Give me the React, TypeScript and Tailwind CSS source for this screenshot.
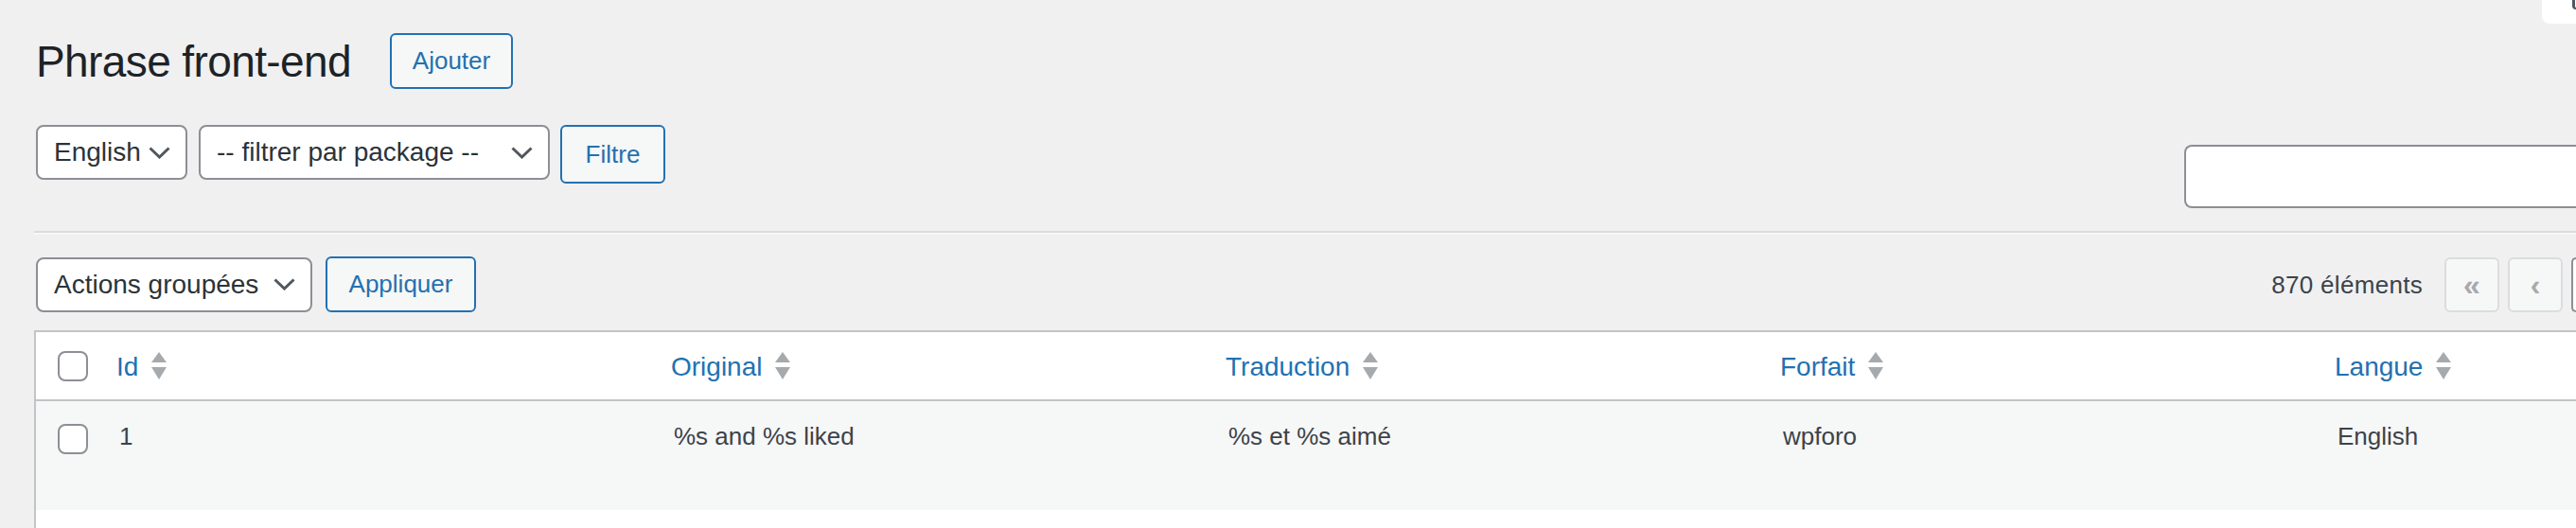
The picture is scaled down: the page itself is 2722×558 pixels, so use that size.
function Chevron() {
  return (
    <svg width="23" height="13" viewBox="0 0 23 13" className="shrink-0">
      <path d="M1.5 1.5 L11.5 11 L21.5 1.5" fill="none" stroke="#50575e" strokeWidth="3" />
    </svg>
  );
}

function SortIcon() {
  return (
    <svg width="18" height="30" viewBox="0 0 18 30" className="ml-[13px] shrink-0">
      <polygon points="9,0 17,11 1,11" fill="#a7aaad" />
      <polygon points="1,16 17,16 9,29" fill="#a7aaad" />
    </svg>
  );
}

function Select({ label, width }: { label: string; width: string }) {
  return (
    <div
      className={`${width} h-[58px] flex items-center justify-between pl-[17px] pr-[16px] bg-white border-2 border-[#8c8f94] rounded-[8px] text-[28px] text-[#2c3338] shrink-0`}
    >
      <span className="whitespace-nowrap">{label}</span>
      <Chevron />
    </div>
  );
}

function Checkbox() {
  return <div className="w-[32px] h-[32px] bg-white border-2 border-[#8c8f94] rounded-[8px]" />;
}

const columns = [
  { head: "Id", cell: "1" },
  { head: "Original", cell: "%s and %s liked" },
  { head: "Traduction", cell: "%s et %s aimé" },
  { head: "Forfait", cell: "wpforo" },
  { head: "Langue", cell: "English" },
];

export default function App() {
  return (
    <div className="w-[2722px] h-[558px] overflow-hidden bg-[#f0f0f1] font-['Liberation_Sans',Arial,sans-serif]">
      {/* screen options tab */}
      <div className="flex justify-end h-[25px]">
        <div className="w-[36px] h-[25px] bg-white rounded-bl-[8px] flex justify-end">
          <div className="w-[4px] h-[10px] border-l-[3px] border-b-[2px] border-[#50575e] rounded-bl-full" />
        </div>
      </div>

      <div className="pl-[36px]">
        {/* title */}
        <div className="mt-[10px] ml-[2px] flex items-start">
          <h1 className="w-[374px] shrink-0 whitespace-nowrap text-[46px] leading-[60px] tracking-[-0.6px] font-normal text-[#1d2327]">
            Phrase front-end
          </h1>
          <button className="w-[130px] h-[59px] border-2 border-[#2271b1] rounded-[6px] bg-[#f6f7f7] text-[26px] text-[#2271b1]">
            Ajouter
          </button>
        </div>

        {/* filters + search */}
        <div className="mt-[37px] flex items-start">
          <div className="ml-[2px] flex items-start gap-[12px]">
            <Select label="English" width="w-[160px]" />
            <Select label="-- filtrer par package --" width="w-[371px]" />
            <button className="-ml-px w-[111px] h-[62px] border-2 border-[#2271b1] rounded-[6px] bg-[#f6f7f7] text-[26px] text-[#2271b1]">
              Filtre
            </button>
          </div>
          <div className="ml-auto mt-[21px] w-[414px] h-[67px] bg-white border-l-2 border-y-2 border-[#8c8f94] rounded-l-[8px]" />
        </div>

        <div className="mt-[24px] border-t-2 border-b-2 border-t-[#dcdcde] border-b-[#f6f7f7]" />

        {/* tablenav */}
        <div className="mt-[23px] flex items-center h-[59px]">
          <div className="ml-[2px] flex items-center gap-[14px]">
            <Select label="Actions groupées" width="w-[292px]" />
            <button className="w-[159px] h-[59px] border-2 border-[#2271b1] rounded-[6px] bg-[#f6f7f7] text-[26px] text-[#2271b1]">
              Appliquer
            </button>
          </div>
          <div className="ml-auto flex items-center">
            <span className="mr-[23px] pt-[2px] text-[26px] tracking-[0.3px] text-[#3c434a] whitespace-nowrap">870 éléments</span>
            <div className="w-[58px] h-[58px] mr-[9px] flex items-center justify-center border-2 border-[#dcdcde] rounded-[6px] bg-[#f6f7f7] text-[32px] font-bold text-[#a7aaad]">
              «
            </div>
            <div className="w-[58px] h-[58px] mr-[9px] flex items-center justify-center border-2 border-[#dcdcde] rounded-[6px] bg-[#f6f7f7] text-[32px] font-bold text-[#a7aaad]">
              ‹
            </div>
            <div className="w-[5px] h-[58px] border-l-2 border-y-2 border-[#8c8f94] rounded-l-[6px] bg-white" />
          </div>
        </div>

        {/* table */}
        <div className="mt-[19px] border-l-2 border-t-2 border-[#c3c4c7] bg-white">
          <div className="grid grid-cols-[68px_586px_586px_586px_586px_586px] h-[73px] bg-white border-b-2 border-[#c3c4c7]">
            <div className="flex items-center pl-[23px]">
              <Checkbox />
            </div>
            {columns.map((c) => (
              <div key={c.head} className="flex items-center pl-[17px]">
                <span className="mt-[3px] text-[28px] text-[#2271b1] whitespace-nowrap">{c.head}</span>
                <SortIcon />
              </div>
            ))}
          </div>
          <div className="grid grid-cols-[68px_586px_586px_586px_586px_586px] h-[115px] bg-[#f6f7f7]">
            <div className="pl-[23px] pt-[24px]">
              <Checkbox />
            </div>
            {columns.map((c) => (
              <div key={c.head} className="pl-[20px] pt-[18px] text-[26px] leading-[39px] text-[#3c434a] whitespace-nowrap">
                {c.cell}
              </div>
            ))}
          </div>
          <div className="h-[40px] bg-white" />
        </div>
      </div>
    </div>
  );
}
